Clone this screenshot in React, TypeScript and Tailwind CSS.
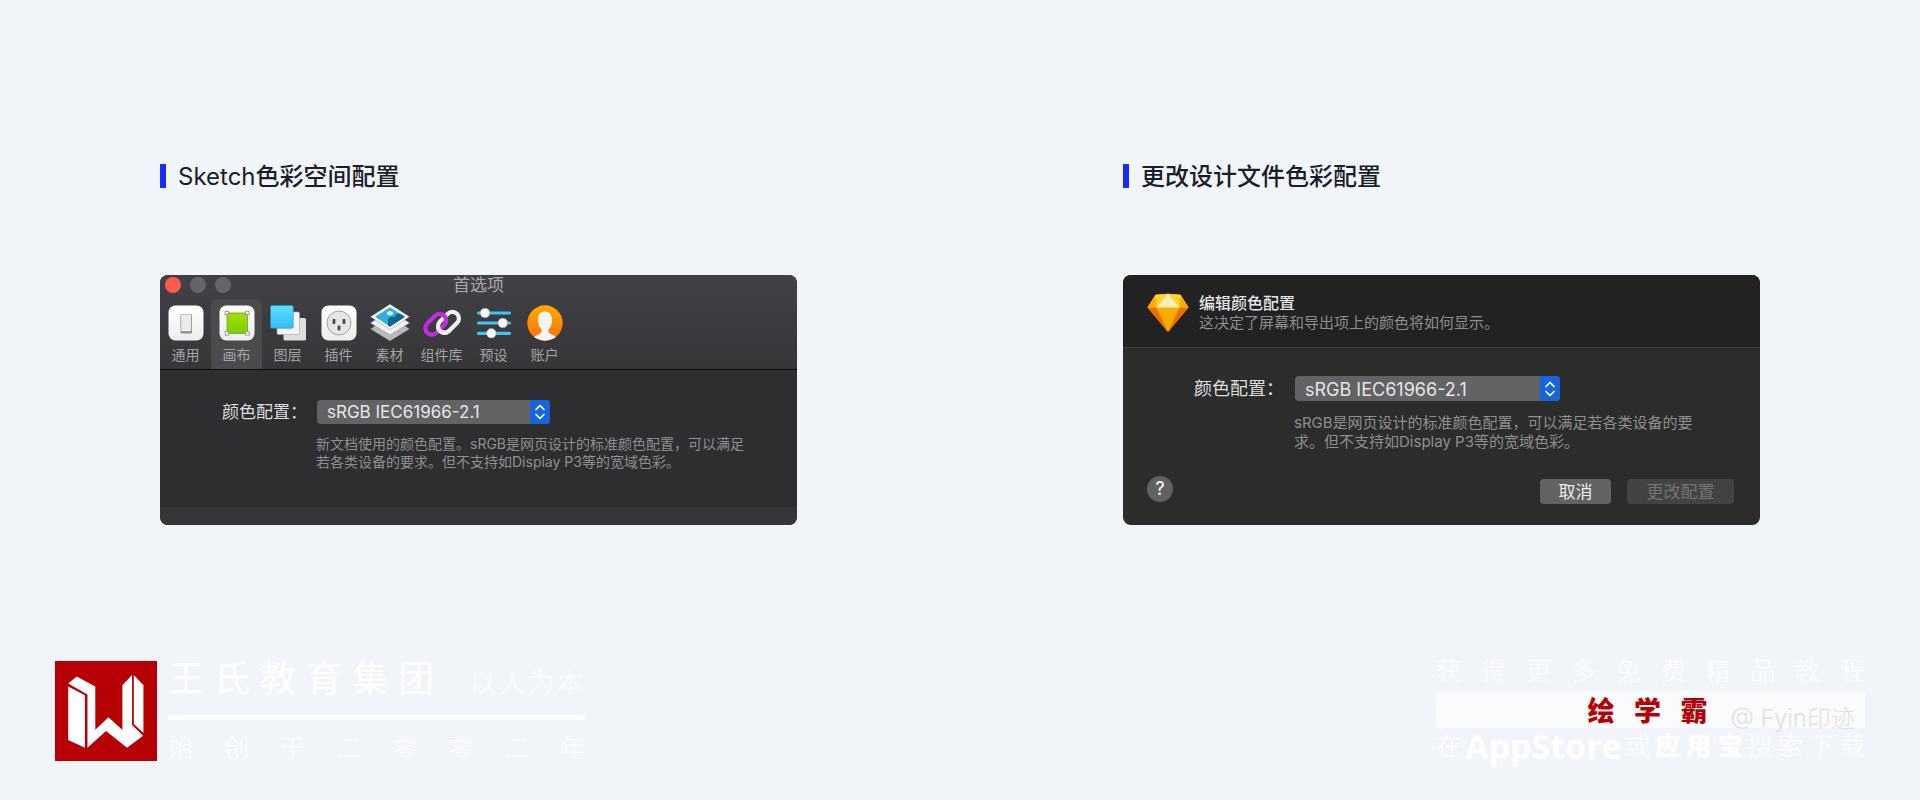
import React from "react";

const toolbarItems: { label: string; wide?: boolean; active?: boolean; icon: React.ReactNode }[] = [
  { label: "通用", icon: <GeneralIcon /> },
  { label: "画布", active: true, icon: <CanvasIcon /> },
  { label: "图层", icon: <LayersIcon /> },
  { label: "插件", icon: <PluginIcon /> },
  { label: "素材", icon: <AssetsIcon /> },
  { label: "组件库", wide: true, icon: <LibraryIcon /> },
  { label: "预设", icon: <PresetsIcon /> },
  { label: "账户", icon: <AccountIcon /> },
];

function GeneralIcon() {
  return (
    <svg className="size-10" viewBox="0 0 40 40" aria-hidden="true">
      <defs>
        <linearGradient id="tile" x1="0" y1="0" x2="0" y2="1">
          <stop offset="0" stopColor="#ffffff" />
          <stop offset="1" stopColor="#ededee" />
        </linearGradient>
      </defs>
      <rect x="2.5" y="2.5" width="35" height="35" rx="7" fill="url(#tile)" />
      <rect x="14.5" y="11" width="11.5" height="19.5" rx="1.5" fill="#8c8c8e" />
      <rect x="15.2" y="11.6" width="10" height="16.6" rx="1" fill="#ececee" />
    </svg>
  );
}

function CanvasIcon() {
  return (
    <svg className="size-10" viewBox="0 0 40 40" aria-hidden="true">
      <defs>
        <linearGradient id="green" x1="0" y1="0" x2="0" y2="1">
          <stop offset="0" stopColor="#a4e000" />
          <stop offset="1" stopColor="#78cf00" />
        </linearGradient>
      </defs>
      <rect x="2.5" y="2.5" width="35" height="35" rx="7" fill="url(#tile)" />
      <rect x="10" y="10" width="20.5" height="20.5" rx="1" fill="url(#green)" stroke="#6b9a18" strokeWidth="0.7" />
      <g fill="#fff" stroke="#8f8f91" strokeWidth="0.9">
        <rect x="8.2" y="8.2" width="3.4" height="3.4" />
        <rect x="28.7" y="8.2" width="3.4" height="3.4" />
        <rect x="8.2" y="28.7" width="3.4" height="3.4" />
        <rect x="28.7" y="28.7" width="3.4" height="3.4" />
      </g>
    </svg>
  );
}

function LayersIcon() {
  return (
    <svg className="size-10" viewBox="0 0 40 40" aria-hidden="true">
      <defs>
        <linearGradient id="sky" x1="0" y1="0" x2="0" y2="1">
          <stop offset="0" stopColor="#5ce0ff" />
          <stop offset="1" stopColor="#35bcf7" />
        </linearGradient>
      </defs>
      <rect x="15.5" y="15" width="22.5" height="22.5" rx="1.5" fill="#dededf" />
      <rect x="9" y="9" width="22.5" height="22.5" rx="1.5" fill="#f4f4f5" stroke="#a5a5a8" strokeWidth="0.6" />
      <rect x="2.5" y="2.5" width="22.8" height="22.8" rx="1.5" fill="url(#sky)" stroke="#2a86ad" strokeWidth="0.5" />
    </svg>
  );
}

function PluginIcon() {
  return (
    <svg className="size-10" viewBox="0 0 40 40" aria-hidden="true">
      <rect x="2.5" y="2.5" width="35" height="35" rx="7" fill="url(#tile)" />
      <circle cx="20" cy="20" r="12" fill="#e6e6e7" stroke="#a2a2a4" />
      <g fill="#4c4c4e">
        <rect x="13.6" y="16" width="2.8" height="5" rx="0.8" />
        <rect x="23.6" y="16" width="2.8" height="5" rx="0.8" />
        <rect x="18.6" y="22.5" width="2.8" height="5" rx="0.8" />
      </g>
    </svg>
  );
}

function AssetsIcon() {
  return (
    <svg className="size-10" viewBox="0 0 40 40" aria-hidden="true">
      <path d="M0.5 26 20 13l19.500 13L20 38z" fill="#b9b9bb" />
      <path d="M0.500 20 20 7l19.500 13L20 32z" fill="#f1f1f2" stroke="#8c8c8e" strokeWidth="0.5" />
      <path d="M0.500 13.800 20 1.200l19.500 12.600L20 26.600z" fill="#fff" stroke="#77777a" strokeWidth="0.4" />
      <path d="M5 13.800 20 4.200l15 9.600L20 23.800z" fill="#2fb2e0" />
      <path d="M18 22.400V15.800l3-2h4.500v-2.600l4.500-.6 5 3.200L20 23.800z" fill="#14678a" />
      <ellipse cx="20" cy="10.200" rx="3" ry="2" fill="#e9faff" />
    </svg>
  );
}

function LibraryIcon() {
  return (
    <svg className="size-10" viewBox="0 0 40 40" aria-hidden="true">
      <g fill="none" strokeWidth="4.2">
        <rect x="14.5" y="12.800" width="24" height="13" rx="6.500" stroke="#f0f0f1" transform="rotate(-45 26.500 19.300)" />
        <rect x="1.800" y="14.800" width="24" height="13" rx="6.500" stroke="#c42be0" transform="rotate(-45 13.800 21.300)" />
        <path d="M16.100 23.200A6.500 6.500 0 0 0 27.200 27.800" stroke="#f0f0f1" />
      </g>
    </svg>
  );
}

function PresetsIcon() {
  return (
    <svg className="size-10" viewBox="0 0 40 40" aria-hidden="true">
      <path d="M4.500 10h31M4.500 20h31M4.500 30.300h31" stroke="#3dc6f3" strokeWidth="3.200" strokeLinecap="round" />
      <g fill="#fbfbfb" stroke="#8b9397" strokeWidth="0.500">
        <circle cx="11" cy="10" r="4.800" />
        <circle cx="28.800" cy="20" r="4.800" />
        <circle cx="17.300" cy="30.300" r="4.800" />
      </g>
    </svg>
  );
}

function AccountIcon() {
  return (
    <svg className="size-10" viewBox="0 0 40 40" aria-hidden="true">
      <defs>
        <linearGradient id="orange" x1="0" y1="0" x2="0" y2="1">
          <stop offset="0" stopColor="#ffab00" />
          <stop offset="1" stopColor="#ff6f00" />
        </linearGradient>
        <clipPath id="disc">
          <circle cx="20" cy="20" r="17.700" />
        </clipPath>
      </defs>
      <circle cx="20" cy="20" r="17.700" fill="url(#orange)" />
      <g clipPath="url(#disc)" fill="#f5f5f6">
        <path d="M20 8.500c4.600 0 7 3.500 7 8.500 0 4.300-1.500 7.700-3.500 9.500v2.500c0 2.500 8.500 2.600 10 9H6.500c1.500-6.400 10-6.500 10-9v-2.500C14.500 24.700 13 21.300 13 17c0-5 2.400-8.500 7-8.500z" />
      </g>
    </svg>
  );
}

function SketchLogo() {
  return (
    <svg className="h-10 w-[42px] shrink-0" viewBox="0 0 42 40" aria-hidden="true">
      <path d="M8.500 1.800 21 .8l12.500 1L41.500 14.500 21 39 .5 14.500z" fill="#fdad00" />
      <path d="M.5 14.500 9.300 14.500 21 39z" fill="#ee6c00" />
      <path d="M41.500 14.500H32.700L21 39z" fill="#ee6c00" />
      <path d="M8.500 1.800 .5 14.500h8.800z" fill="#fdad00" />
      <path d="M33.500 1.800l8 12.700h-8.800z" fill="#fdad00" />
      <path d="M8.500 1.800 21 .8 9.300 14.500z" fill="#fdd231" />
      <path d="M33.500 1.800 21 .8l11.700 13.700z" fill="#fdd231" />
      <path d="M21 .8 32.700 14.500H9.300z" fill="#feeeb7" />
    </svg>
  );
}

function BrandLogo() {
  return (
    <svg className="h-[100px] w-[102px] shrink-0" viewBox="42 49 286 301" preserveAspectRatio="none" role="img" aria-label="王氏教育集团">
      <rect x="42" y="49" width="286" height="301" fill="#b70005" />
      <g fill="#fff">
        <path d="M79 126l47 26v158l-47-23z" />
        <path d="M79 117l24-21 52 30v130l37-38 39 39V122l27-31v151l31 32-45 36-59-50-52 50V150z" />
        <path d="M263 91l27 31v144l-27-27z" />
      </g>
    </svg>
  );
}

function SectionTitle({ children }: { children: React.ReactNode }) {
  return (
    <h2 className="flex h-6 items-start gap-3 text-2xl leading-[26px] font-medium text-[#1b1d2a]">
      <span className="h-6 w-1.5 bg-[#1a2bff]" />
      <span>{children}</span>
    </h2>
  );
}

function ProfileSelect({ id, className, selectClass }: { id: string; className: string; selectClass: string }) {
  return (
    <div className={`relative overflow-hidden rounded-sm bg-[#636365] ${className}`}>
      <select id={id} className={`size-full appearance-none bg-transparent pl-2.5 text-[#e6e6e7] outline-none ${selectClass}`}>
        <option>sRGB IEC61966-2.1</option>
      </select>
      <span className="pointer-events-none absolute inset-y-0 right-0 flex w-5 items-center justify-center bg-[#1764dd]">
        <svg className="h-4 w-3" viewBox="0 0 12 16" fill="none" stroke="#fff" strokeWidth="1.700" strokeLinecap="round" strokeLinejoin="round" aria-hidden="true">
          <path d="M2 5.500 6 1.500l4 4M2 10.500l4 4 4-4" />
        </svg>
      </span>
    </div>
  );
}

function PreferencesWindow() {
  return (
    <div className="flex h-[250px] flex-col overflow-hidden rounded-lg bg-[#2e2e30]">
      <div className="border-b border-[#0e0e10] bg-linear-to-b from-[#424146] to-[#363538]">
        <div className="grid h-6 grid-cols-3 items-center px-[5px]">
          <div className="flex gap-[9px] pb-1">
            <button aria-label="关闭" className="size-4 rounded-full bg-[#ff5a52]" />
            <button aria-label="最小化" className="size-4 rounded-full bg-[#656467]" />
            <button aria-label="缩放" className="size-4 rounded-full bg-[#656467]" />
          </div>
          <h3 className="pb-1 text-center text-[17px] leading-5 text-[#a9a9ab]">首选项</h3>
        </div>
        <div className="flex">
          {toolbarItems.map((item) => (
            <button
              key={item.label}
              className={`flex h-[70px] flex-col items-center pt-1 text-sm leading-5 text-[#a3a3a5] ${item.wide ? "w-[53px]" : "w-[51px]"} ${item.active ? "rounded-t-md bg-[#4b4b4e]" : ""}`}
            >
              {item.icon}
              <span className="pt-0.5">{item.label}</span>
            </button>
          ))}
        </div>
      </div>
      <div className="grow pt-[30px] pl-[62px]">
        <div className="flex items-center">
          <label htmlFor="default-profile" className="w-[95px] text-[17px] leading-6 text-[#dcdcdd]">
            颜色配置：
          </label>
          <ProfileSelect id="default-profile" className="h-6 w-[233px]" selectClass="text-[17px]" />
        </div>
        <p className="pt-[11px] pl-[94px] text-sm leading-[18px] text-[#8f8f91]">
          新文档使用的颜色配置。sRGB是网页设计的标准颜色配置，可以满足
          <br />
          若各类设备的要求。但不支持如Display P3等的宽域色彩。
        </p>
      </div>
      <div className="h-[18px] bg-[#363538]" />
    </div>
  );
}

function EditProfileDialog() {
  return (
    <div className="flex h-[250px] flex-col overflow-hidden rounded-lg bg-[#2c2c2c]">
      <div className="flex h-[73px] items-center gap-2.5 border-b border-[#3b3b3b] bg-[#222222] px-6 pt-1">
        <SketchLogo />
        <div>
          <h3 className="text-base leading-5 font-medium text-[#e6e6e6]">编辑颜色配置</h3>
          <p className="text-[15px] leading-5 text-[#8d8d8d]">这决定了屏幕和导出项上的颜色将如何显示。</p>
        </div>
      </div>
      <div className="flex grow flex-col justify-between pt-7 pr-[26px] pb-[21px] pl-6">
        <div className="pl-[47px]">
          <div className="flex items-center">
            <label htmlFor="document-profile" className="w-[101px] text-lg leading-6 text-[#dcdcdc]">
              颜色配置：
            </label>
            <ProfileSelect id="document-profile" className="h-[25px] w-[265px]" selectClass="text-lg" />
          </div>
          <p className="pt-3 pl-[100px] text-[15px] leading-[19px] text-[#8f8f8f]">
            sRGB是网页设计的标准颜色配置，可以满足若各类设备的要
            <br />
            求。但不支持如Display P3等的宽域色彩。
          </p>
        </div>
        <div className="flex items-end gap-4">
          <button aria-label="帮助" className="mr-auto mb-0.5 size-[26px] rounded-full bg-[#616161] text-lg leading-6 font-medium text-[#ededed]">
            ?
          </button>
          <button className="h-[25px] w-[71px] rounded-sm bg-[#636363] text-[17px] leading-6 text-[#ececec]">取消</button>
          <button disabled className="h-[25px] w-[107px] rounded-sm bg-[#434343] text-[17px] leading-6 text-[#737373]">
            更改配置
          </button>
        </div>
      </div>
    </div>
  );
}

export default function App() {
  return (
    <div
      lang="zh-CN"
      className="flex min-h-screen flex-col justify-between bg-[#f1f5fa] font-['Inter','Noto_Sans_CJK_SC',sans-serif]"
    >
      <main className="grid grid-cols-2 gap-[326px] px-40 pt-[164px]">
        <section className="flex flex-col gap-[87px]">
          <SectionTitle>
            <span className="font-normal">Sketch</span>色彩空间配置
          </SectionTitle>
          <PreferencesWindow />
        </section>
        <section className="flex flex-col gap-[87px]">
          <SectionTitle>更改设计文件色彩配置</SectionTitle>
          <EditProfileDialog />
        </section>
      </main>
      <footer className="flex items-end justify-between px-[55px] pb-[38px] text-white">
        <div className="flex items-center gap-[11px]">
          <BrandLogo />
          <div className="w-[417px]">
            <div className="flex items-end justify-between pr-0.5">
              <strong className="w-[266px] text-4xl leading-10 font-normal [text-align-last:justify]">王氏教育集团</strong>
              <span className="w-[113px] text-[26px] leading-8 font-light [text-align-last:justify]">以人为本</span>
            </div>
            <div className="mt-4 mb-3.5 h-[5px] bg-white" />
            <p className="text-[25px] leading-7 font-light [text-align-last:justify]">始创于二零零二年</p>
          </div>
        </div>
        <div className="w-[429px]">
          <p className="text-[25px] leading-7 font-light [text-align-last:justify]">获得更多免费精品教程</p>
          <div className="relative mt-1.5 flex h-[37px] items-center justify-center bg-white/60 pt-1 pr-1.5">
            <strong className="w-[120px] text-[27px] leading-8 font-black text-[#b70005] [text-align-last:justify]">绘学霸</strong>
            <span className="absolute top-3 right-2.5 text-2xl leading-8 font-light whitespace-nowrap text-[#dfe1e4]">@ Fyin印迹</span>
          </div>
          <p className="flex items-center justify-between pt-0.5 text-[25px] leading-8 font-light">
            <span>在</span>
            <b className="font-['Open_Sans'] text-[34px] leading-7 font-bold">AppStore</b>
            <span>或</span>
            <b className="w-[88px] font-black [text-align-last:justify]">应用宝</b>
            <span className="w-[118px] [text-align-last:justify]">搜索下载</span>
          </p>
        </div>
      </footer>
    </div>
  );
}
